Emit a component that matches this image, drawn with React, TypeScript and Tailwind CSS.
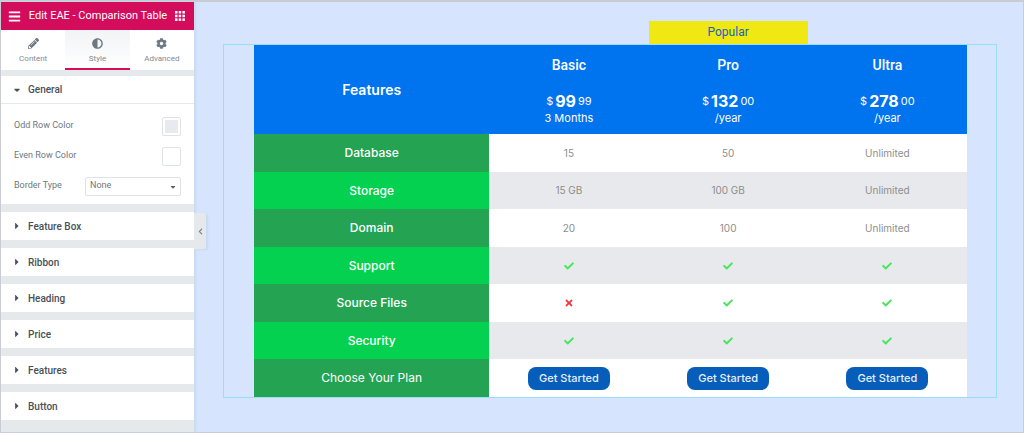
import type { ReactNode } from 'react';
import { FaAdjust, FaBars, FaCaretDown, FaCaretRight, FaCheck, FaChevronLeft, FaCog, FaPencilAlt, FaTimes } from 'react-icons/fa';

type Cell = string | boolean;

const closedSections = ['Feature Box', 'Ribbon', 'Heading', 'Price', 'Features', 'Button'];

const plans = [
  { name: 'Basic', whole: '99', cents: '99', period: '3 Months' },
  { name: 'Pro', whole: '132', cents: '00', period: '/year', ribbon: 'Popular' },
  { name: 'Ultra', whole: '278', cents: '00', period: '/year' },
];

const rows: { label: string; cells: Cell[] }[] = [
  { label: 'Database', cells: ['15', '50', 'Unlimited'] },
  { label: 'Storage', cells: ['15 GB', '100 GB', 'Unlimited'] },
  { label: 'Domain', cells: ['20', '100', 'Unlimited'] },
  { label: 'Support', cells: [true, true, true] },
  { label: 'Source Files', cells: [false, true, true] },
  { label: 'Security', cells: [true, true, true] },
];

function AppsIcon() {
  return (
    <svg viewBox="0 0 10 10" className="size-[10px]" fill="currentColor">
      {[0, 3.7, 7.4].map((y) => [0, 3.7, 7.4].map((x) => <rect key={`${x}-${y}`} x={x} y={y} width="2.5" height="2.5" />))}
    </svg>
  );
}

function Tab({ icon, label, active }: { icon: ReactNode; label: string; active?: boolean }) {
  return (
    <button
      className={
        active
          ? 'flex-1 flex flex-col items-center pt-2 gap-1 border-b-2 border-[#d30c5c] bg-linear-to-b from-[#f1f3f5] to-white'
          : 'flex-1 flex flex-col items-center pt-2 gap-1 border-b-2 border-transparent'
      }
    >
      <span className="text-[11px] text-[#6d7882]">{icon}</span>
      <span className="text-[8px] leading-3 text-[#7f8a94]">{label}</span>
    </button>
  );
}

function Sidebar() {
  return (
    <aside className="relative w-[193px] shrink-0 bg-[#e6e9ec] font-['Roboto',sans-serif] shadow-[2px_0_2px_#c9d9f2]">
      <header className="h-7 flex items-center justify-between px-[7px] pr-[9px] bg-[#d30c5c] text-white">
        <button aria-label="Menu"><FaBars className="text-[13px]" /></button>
        <h1 className="text-[11px] whitespace-nowrap">Edit EAE - Comparison Table</h1>
        <button aria-label="Widgets"><AppsIcon /></button>
      </header>
      <nav className="h-10 flex bg-white mb-[6px]">
        <Tab icon={<FaPencilAlt />} label="Content" />
        <Tab icon={<FaAdjust />} label="Style" active />
        <Tab icon={<FaCog />} label="Advanced" />
      </nav>

      <section className="bg-white mb-2">
        <button className="w-full h-7 flex items-center px-[13px] gap-2 border-b border-[#e6e9ec] text-[10px] font-medium text-[#495157]">
          <FaCaretDown className="w-[6px]" />
          General
        </button>
        <div className="h-[100px] pt-[7px] px-[13px] text-[9px] text-[#6d7882]">
          <div className="h-[30px] flex items-center justify-between">
            <label htmlFor="odd">Odd Row Color</label>
            <button id="odd" className="size-[19px] p-[2px] border border-[#dfe2e6] rounded-xs bg-white">
              <span className="block size-full bg-[#e8eaed]"></span>
            </button>
          </div>
          <div className="h-[30px] flex items-center justify-between">
            <label htmlFor="even">Even Row Color</label>
            <button id="even" className="size-[19px] border border-[#dfe2e6] rounded-xs bg-white"></button>
          </div>
          <div className="h-[30px] flex items-center justify-between">
            <label htmlFor="border">Border Type</label>
            <div className="relative w-24">
              <select id="border" className="block appearance-none w-full h-[19px] px-1 border border-[#dfe2e6] rounded-xs bg-white">
                <option>None</option>
                <option>Solid</option>
                <option>Dashed</option>
              </select>
              <FaCaretDown className="absolute right-1 top-[6px] text-[8px] text-[#556068] pointer-events-none" />
            </div>
          </div>
        </div>
      </section>

      <div className="flex flex-col gap-2">
        {closedSections.map((title) => (
          <button key={title} className="h-7 flex items-center px-[13px] gap-2 bg-white text-[10px] font-medium text-[#495157]">
            <FaCaretRight className="w-[6px]" />
            {title}
          </button>
        ))}
      </div>

      {/* collapse handle */}
      <button aria-label="Collapse panel" className="absolute left-full top-[211px] w-3 h-9 flex items-center justify-center rounded-r-xs bg-[#e6e9ec] text-[7px] text-[#7b858e] shadow-[2px_1px_2px_#c9d9f2]">
        <FaChevronLeft />
      </button>
    </aside>
  );
}

function ComparisonTable() {
  return (
    <table className="w-full table-fixed text-center font-['Inter',sans-serif]">
      <thead>
        <tr className="h-[89px] bg-[#0073ee] text-white">
          <th className="w-[33%] text-sm font-semibold">Features</th>
          {plans.map((plan) => (
            <th key={plan.name} className="relative align-top pt-[11px] font-normal">
              {plan.ribbon && (
                <div className="absolute inset-x-0 bottom-full mb-px h-[23px] bg-[#f0e813] text-xs leading-[23px] text-[#1a62bd] font-['Roboto',sans-serif]">
                  {plan.ribbon}
                </div>
              )}
              <div className="text-sm leading-[18px] font-medium font-['Roboto',sans-serif]">{plan.name}</div>
              <div className="mt-[18px] h-[18px] flex items-center justify-center gap-[2px] text-[11px]">
                <span>$</span>
                <span className="text-base font-bold">{plan.whole}</span>
                <span>{plan.cents}</span>
              </div>
              <div className="text-[11px] leading-4">{plan.period}</div>
            </th>
          ))}
        </tr>
      </thead>
      <tbody>
        {rows.map((row) => (
          <tr key={row.label} className="h-[38px] even:h-[37px] bg-white even:bg-[#e8e9ec] group">
            <th className="bg-[#24a453] group-even:bg-[#04d14f] text-xs font-medium text-white">{row.label}</th>
            {row.cells.map((cell, i) => (
              <td key={i} className="text-[10px] text-[#8d8d8d]">
                {cell === true && <FaCheck className="mx-auto text-[#47e65c]" />}
                {cell === false && <FaTimes className="mx-auto text-[#f8323a]" />}
                {typeof cell === 'string' && cell}
              </td>
            ))}
          </tr>
        ))}
        <tr className="h-[38px] bg-white">
          <th className="bg-[#24a453] text-xs font-normal text-white">Choose Your Plan</th>
          {plans.map((plan) => (
            <td key={plan.name}>
              <button className="block mx-auto h-[23px] px-[11px] rounded-lg bg-[#075dba] text-[11px] font-medium text-[#e6effa]">Get Started</button>
            </td>
          ))}
        </tr>
      </tbody>
    </table>
  );
}

export default function App() {
  return (
    <div className="min-h-screen flex border border-t-2 border-[#c9ccd3] bg-[#d6e5fd]">
      <Sidebar />
      <main className="flex-1 pt-[42px] pl-[29px] pr-[26px] pb-8">
        <div className="border border-[#9adcfb] pl-[30px] pr-[29px]">
          <ComparisonTable />
        </div>
      </main>
    </div>
  );
}
